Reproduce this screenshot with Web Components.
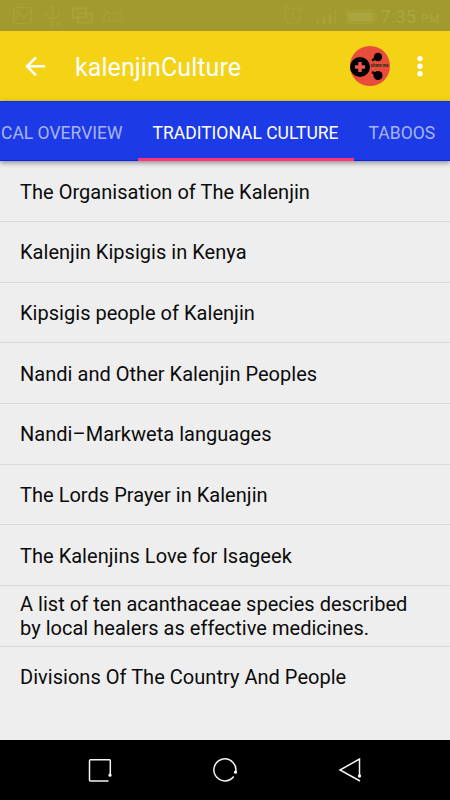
<!DOCTYPE html>
<html lang="en"><head><meta charset="utf-8"><title>kalenjinCulture</title>
<style>html,body{margin:0;height:100%;overflow:hidden;background:#eee;font-family:Roboto,sans-serif}</style></head>
<body><culture-app></culture-app>
<script>
const define=(name,html)=>customElements.define(name,class extends HTMLElement{
  constructor(){super();const t=document.createElement('template');t.innerHTML=html;
    this.attachShadow({mode:'open'}).append(t.content.cloneNode(true));}
});
define('status-bar',`<style>
:host{display:flex;height:31px;background:#a09a2f;color:#aca640;box-sizing:border-box;align-items:center;justify-content:space-between;padding:0 10px 0 12px}
svg{display:block;fill:none;stroke:#a8a239;stroke-width:1.2}
.r{display:flex;align-items:center}
.t{font-size:18px;line-height:31px;letter-spacing:.2px;margin-left:3px;padding-top:3px;white-space:nowrap}small{font-size:12.500px}
</style>
<svg width="114" height="31" viewBox="12 0 114 31"><rect x="13.500" y="7.500" width="18" height="16" rx="3"/><path d="M15 19l5-5 4 3 7-6"/><circle cx="18" cy="12" r="1.300"/>
<path d="M52.500 7v14M50.500 9l2-3 2 3M46 12v3l6.500 5 6.500-5v-3M54.500 22h-3v3h3M57 22v4M55.500 24h3M60 22v4M58.500 24h3"/>
<path d="M73 8.500h13v9H73zM78 13.500h14v9H78z" stroke-width="1.800"/>
<path d="M104 21v-4l2-4h14l2 4v4zM107 13l-2-4M119 13l2-4"/><path d="M109 17h1M116 17h1" stroke-width="2"/></svg>
<div class="r"><svg width="96" height="31" viewBox="283 0 96 31"><circle cx="294" cy="16" r="8"/><path d="M294 11v5l4 3M284 11l5-5M299 6l5 5"/><path d="M319 24v-4M325 24v-7M331 24v-10" stroke-width="2.500"/><path d="M336 24V10" stroke="#a49e35" stroke-width="2"/><rect x="347.500" y="10.500" width="28" height="13" rx="2"/><rect x="349.500" y="12.500" width="24" height="9" fill="#aba53f"/><path d="M376 14l2 3-2 3"/></svg><span class="t">7:35 <small>PM</small></span></div>`);
define('share-badge',`<style>:host{display:block;position:relative;width:40px;height:40px}svg{display:block}
span{position:absolute;left:20.500px;top:15.500px;font:bold 4.600px/8px Roboto,sans-serif;color:#231;letter-spacing:-.15px;white-space:nowrap}</style>
<svg width="40" height="40" viewBox="0 0 40 40"><circle cx="20" cy="20" r="20" fill="#e94b3c"/><circle cx="10" cy="21" r="10"/><path d="M10 16v10M5 21h10" stroke="#f0564a" stroke-width="3.400"/><circle cx="28" cy="11" r="4.200"/><circle cx="28" cy="29.500" r="4.500"/><path d="M22 14.500l5-3M22 26l5 3" stroke="#000" stroke-width="2.600"/></svg><span>share me</span>`);
define('app-bar',`<style>:host{display:flex;height:70px;background:#f4d215;color:#fff;align-items:center;box-sizing:border-box;padding:0 20px}
h1{flex:1;margin:4px 0 0 24px;font-weight:400;font-size:25px;line-height:30px;letter-spacing:.08px}svg{display:block}</style>
<svg width="31" height="30" viewBox="20 51 31 30" fill="none" stroke="#fff" stroke-width="2.400"><path d="M45 66.300H27M36 57.300l-9 9 9 9"/></svg>
<h1><slot></slot></h1><share-badge></share-badge>
<svg width="20" height="30" viewBox="0 0 20 30" style="margin-left:20px"><g fill="#fff"><circle cx="10" cy="7.600" r="2.700"/><circle cx="10" cy="15.200" r="2.700"/><circle cx="10" cy="22.800" r="2.700"/></g></svg>`);
define('tab-item',`<style>:host{display:block;box-sizing:border-box;height:60px;padding:2px 15px 0;flex:none;font-size:17.500px;line-height:60px;color:#a9b4f5;white-space:nowrap}
:host([active]){color:#fff;border-bottom:3px solid #ff3379}</style><slot></slot>`);
define('tab-strip',`<style>:host{display:flex;height:60px;background:#1c3ae6;position:relative;box-shadow:inset 0 1px #0c2eea,inset 0 -1px #0824ea,0 2px 5px rgba(0,0,0,.4)}</style><slot></slot>`);
define('list-row',`<style>:host{display:flex;align-items:center;box-sizing:border-box;height:60.670px;padding:1px 20px 0;border-bottom:1px solid #d9d9d9;font-size:20px;line-height:24px;color:#0b0b0b;letter-spacing:.03px}:host(:last-of-type){border-color:transparent}</style><span><slot></slot></span>`);
define('nav-bar',`<style>:host{display:flex;justify-content:space-between;height:60px;background:#000;align-items:center;box-sizing:border-box;padding:0 87px}svg{fill:none;stroke:#f4f4f4;stroke-width:1.500}</style>
<svg width="26" height="26" viewBox="87 757 26 26"><path d="M108.500 781H90.500Q89.500 781 89.500 780V761Q89.500 759.700 90.500 759.700H109.500Q110.300 759.700 110.300 761V775"/><circle cx="110" cy="775.200" r=".9" fill="#fff"/></svg>
<svg width="26" height="26" viewBox="212 757 26 26"><path d="M233.700 776.500A11 11 0 1 1 235.700 772"/><circle cx="235.500" cy="772.200" r=".9" fill="#fff"/></svg>
<svg width="26" height="26" viewBox="337 757 26 26"><path d="M360 781l-20-11 19.500-11V776"/><circle cx="359.500" cy="776" r=".9" fill="#fff"/></svg>`);
define('culture-app',`<style>:host{display:flex;flex-direction:column;width:450px;height:800px;overflow:hidden;background:#eee}main{flex:1;overflow:hidden;padding-top:.4px}tab-item:first-child{margin-left:-14px}tab-strip{z-index:1}</style>
<status-bar></status-bar><app-bar>kalenjinCulture</app-bar>
<tab-strip><tab-item>CAL OVERVIEW</tab-item><tab-item active>TRADITIONAL CULTURE</tab-item><tab-item>TABOOS</tab-item></tab-strip>
<main><list-row>The Organisation of The Kalenjin</list-row><list-row>Kalenjin Kipsigis in Kenya</list-row><list-row>Kipsigis people of Kalenjin</list-row><list-row>Nandi and Other Kalenjin Peoples</list-row><list-row>Nandi–Markweta languages</list-row><list-row>The Lords Prayer in Kalenjin</list-row><list-row>The Kalenjins Love for Isageek</list-row><list-row>A list of ten acanthaceae species described<br>by local healers as effective medicines.</list-row><list-row>Divisions Of The Country And People</list-row></main><nav-bar></nav-bar>`);
</script></body></html>
